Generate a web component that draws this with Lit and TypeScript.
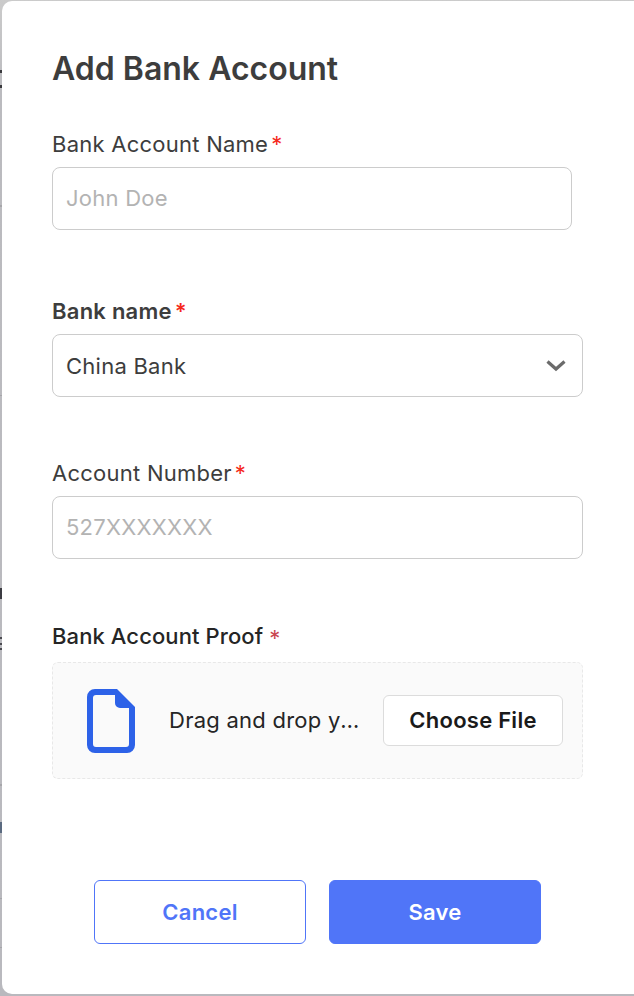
import { LitElement, html, css } from "lit";
import { customElement } from "lit/decorators.js";

const MARKS = [
  { y: 70, h: 3, c: "#3a3a3e" },
  { y: 85, h: 3, c: "#3a3a3e" },
  { y: 205, h: 2, c: "#a6a6aa" },
  { y: 395, h: 1, c: "#a6a6aa" },
  { y: 588, h: 11, c: "#3c3c42" },
  { y: 637, h: 2, c: "#4a4a50" },
  { y: 643, h: 2, c: "#4a4a50" },
  { y: 648, h: 2, c: "#4a4a50" },
  { y: 784, h: 2, c: "#a6a6aa" },
  { y: 822, h: 11, c: "#5a6a80" },
  { y: 898, h: 1, c: "#a6a6aa" },
  { y: 947, h: 1, c: "#a6a6aa" },
];

@customElement("app-root")
export class AppRoot extends LitElement {
  static styles = css`
    :host {
      display: block;
      position: relative;
      width: 634px;
      height: 996px;
      overflow: hidden;
      background: linear-gradient(#cbcbcb 0, #bbbbbf 90px, #b9b9be 100%);
      font-family: Inter, "Liberation Sans", sans-serif;
      letter-spacing: 0.25px;
      color: #3d3d3d;
      padding: 1px 0 2px 2px;
      box-sizing: border-box;
    }
    .mark {
      position: absolute;
      left: 0;
      width: 2px;
    }
    .modal {
      height: 993px;
      box-sizing: border-box;
      background: #fff;
      border-radius: 10px 0 0 10px;
      padding: 50px 51px 0 50px;
      display: flex;
      flex-direction: column;
    }
    h1 {
      margin: 0 0 45px;
      font-size: 32px;
      line-height: 36px;
      font-weight: 600;
      letter-spacing: 0;
      color: #3d3d3d;
    }
    .field {
      display: flex;
      flex-direction: column;
      gap: 11px;
    }
    .field.name { margin-bottom: 69px; }
    .field.bank { margin-bottom: 64px; }
    .field.number { margin-bottom: 65px; }
    label {
      font-size: 22px;
      line-height: 24px;
      height: 24px;
      font-weight: 400;
      display: block;
    }
    label.strong { font-weight: 600; }
    .req { color: #f5291c; margin-left: 3px; }
    .control {
      height: 63px;
      box-sizing: border-box;
      border: 1px solid #cccccc;
      border-radius: 8px;
      padding: 0 13px;
      display: flex;
      align-items: center;
      justify-content: space-between;
      font-size: 22px;
      color: #3d3d3d;
    }
    .control.short { width: 520px; }
    .ph { color: #b3b3b3; margin-bottom: 2px; }
    .chev { width: 20px; height: 13px; margin-right: 3px; display: block; }
    .field.proof { gap: 14px; margin-bottom: 101px; }
    .proof label { font-weight: 500; color: #252525; letter-spacing: 0.1px; }
    .proof .req {
      color: #c9464f;
      margin-left: 6px;
      font-weight: 400;
      line-height: 1;
      vertical-align: -2px;
    }
    .drop {
      height: 117px;
      box-sizing: border-box;
      background: #fafafa;
      border: 1px dashed #e8e8e8;
      border-radius: 6px;
      padding: 0 19px 0 34px;
      display: flex;
      align-items: center;
    }
    .file { width: 48px; height: 64px; flex: none; display: block; margin-right: 34px; }
    .drop-text {
      flex: 1;
      min-width: 0;
      margin: 0 20px 2px 0;
      font-size: 22px;
      line-height: 26px;
      color: #252525;
      white-space: nowrap;
      overflow: hidden;
      text-overflow: ellipsis;
    }
    .choose {
      flex: none;
      width: 180px;
      height: 51px;
      box-sizing: border-box;
      background: #fff;
      border: 1px solid #dcdcdc;
      border-radius: 6px;
      font: 600 22px Inter, "Liberation Sans", sans-serif;
      letter-spacing: 0.25px;
      color: #1a1a1a;
      padding: 0 0 2px;
    }
    .actions {
      display: flex;
      gap: 23px;
      padding-left: 42px;
    }
    .btn {
      width: 212px;
      height: 64px;
      box-sizing: border-box;
      border-radius: 6px;
      border: 1px solid #5075f8;
      font: 600 22px Inter, "Liberation Sans", sans-serif;
      letter-spacing: 0.25px;
      padding: 0;
    }
    .cancel { background: #fff; color: #5075f8; }
    .save { background: #5075f8; color: #fff; }
  `;

  render() {
    return html`
      ${MARKS.map(
        (m) => html`<div class="mark" style="top:${m.y}px;height:${m.h}px;background:${m.c}"></div>`
      )}
      <div class="modal">
        <h1>Add Bank Account</h1>
        <div class="field name">
          <label>Bank Account Name<span class="req">*</span></label>
          <div class="control short"><span class="ph">John Doe</span></div>
        </div>
        <div class="field bank">
          <label class="strong">Bank name<span class="req">*</span></label>
          <div class="control">
            <span>China Bank</span>
            <svg class="chev" viewBox="0 0 20 13" aria-hidden="true">
              <path d="M1.5 2.5 L10 10 L18.5 2.5" fill="none" stroke="#6b6b6b" stroke-width="3.2" />
            </svg>
          </div>
        </div>
        <div class="field number">
          <label>Account Number<span class="req">*</span></label>
          <div class="control"><span class="ph">527XXXXXXX</span></div>
        </div>
        <div class="field proof">
          <label>Bank Account Proof<span class="req">*</span></label>
          <div class="drop">
            <svg class="file" viewBox="0 0 48 64" aria-hidden="true">
              <path
                fill="#2d62e8"
                fill-rule="evenodd"
                d="M8 0 H30 L48 18 V56 a8 8 0 0 1 -8 8 H8 a8 8 0 0 1 -8 -8 V8 a8 8 0 0 1 8 -8 Z M9 6 a3 3 0 0 0 -3 3 V55 a3 3 0 0 0 3 3 H39 a3 3 0 0 0 3 -3 V19 H33 a5 5 0 0 1 -5 -5 V6 Z"
              />
            </svg>
            <span class="drop-text">Drag and drop your file here</span>
            <button class="choose">Choose File</button>
          </div>
        </div>
        <div class="actions">
          <button class="btn cancel">Cancel</button>
          <button class="btn save">Save</button>
        </div>
      </div>
    `;
  }
}
